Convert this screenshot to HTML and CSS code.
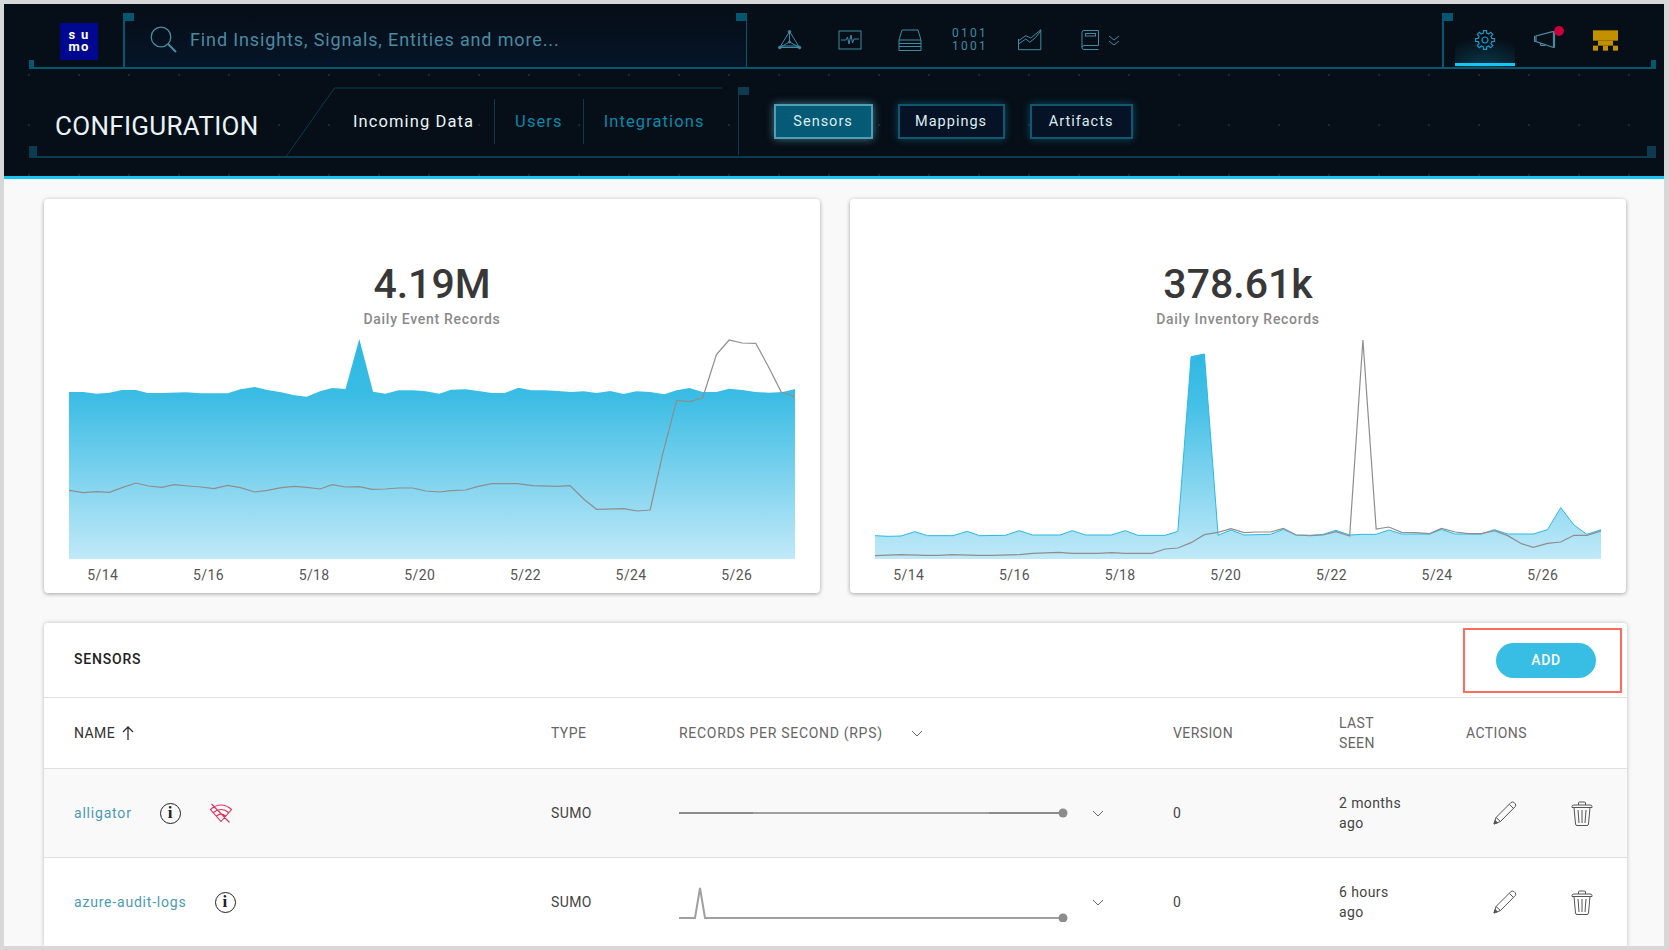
FILE: index.html
```html
<!DOCTYPE html>
<html>
<head>
    <title>Configuration - Sensors</title>
    <link rel="stylesheet" href="styles.css">
</head>
<body>
<div class="window">
    <header class="header">
        <div class="topbar">
            <span class="tick tick-left"></span>
            <span class="tick tick-right"></span>
            <div class="logo">s u<br>mo</div>
            <div class="search">
                <svg class="search-icon" width="27" height="27" viewBox="0 0 27 27"><circle cx="11" cy="11" r="9.8"/><path d="M18 18l8 8" stroke-width="2"/></svg>
                <span class="search-text">Find Insights, Signals, Entities and more...</span>
            </div>
            <nav class="appnav">
                <span class="appnav-item">
                    <svg width="24" height="20" viewBox="0 0 24 20"><path d="M11.5 1.5L1.7 17.5H21.5ZM11.5 1.5V12M1.7 17.5L11.5 12L21.5 17.5M3 16H20"/><circle cx="11.5" cy="1.8" r="1.3"/><circle cx="1.8" cy="17.5" r="1.3"/><circle cx="21.5" cy="17.5" r="1.3"/><circle cx="11.5" cy="12" r="1"/></svg>
                </span>
                <span class="appnav-item">
                    <svg width="24" height="20" viewBox="0 0 24 20"><rect x="1" y="1" width="22" height="18"/><path d="M3 10H8L9.5 7L11 14L13 5L14.5 13L16 9H21"/></svg>
                </span>
                <span class="appnav-item">
                    <svg width="24" height="22" viewBox="0 0 24 22"><path d="M1 11L4 1H20L23 11V21.5H1ZM1 11H23M1 14.5H23M1 17.5H23M20 13V13.1M20 16V16.1M20 19.5V19.6"/></svg>
                </span>
                <span class="appnav-item binary">0101<br>1001</span>
                <span class="appnav-item">
                    <svg width="24" height="22" viewBox="0 0 24 22"><path d="M.5 10V20.7H22.8V.7M.5 11.7L7.8 6.7L12.8 9L17.8 5L22.8.7M.5 15L7.8 10L11.8 13.3L17.8 8.3L22.8 1.7"/></svg>
                </span>
                <span class="appnav-item">
                    <svg width="18" height="20" viewBox="0 0 18 20"><path d="M17.5.5H3Q1 .5 1 2.5V17.5Q1 19.5 3 19.5H17.5M17.5.5V15.5H3Q1 15.5 1 17.5"/><rect x="4.5" y="3.5" width="10" height="2.5"/></svg>
                    <svg class="double-chevron" width="12" height="11" viewBox="0 0 12 11"><path d="M1 1L6 5L11 1M1 6L6 10L11 6"/></svg>
                </span>
            </nav>
            <div class="userbar">
                <span class="userbar-item is-active">
                    <svg width="20" height="20" viewBox="-10 -10 20 20" class="gear"><polygon points="-1.69,6.79 -1.49,9.38 1.49,9.38 1.69,6.79 3.61,6 5.58,7.69 7.69,5.58 6,3.61 6.79,1.69 9.38,1.49 9.38,-1.49 6.79,-1.69 6,-3.61 7.69,-5.58 5.58,-7.69 3.61,-6 1.69,-6.79 1.49,-9.38 -1.49,-9.38 -1.69,-6.79 -3.61,-6 -5.58,-7.69 -7.69,-5.58 -6,-3.61 -6.79,-1.69 -9.38,-1.49 -9.38,1.49 -6.79,1.69 -6,3.61 -7.69,5.58 -5.58,7.69 -3.61,6"/><circle r="3"/></svg>
                </span>
                <span class="userbar-item">
                    <svg class="megaphone" width="22" height="18" viewBox="0 0 22 18"><path d="M20.5 0V16.7M19.5 .3L2 5V10.5L19.5 16.5ZM.5 5V10.5H2M6 12L7 14.5H10.5L11 13.8"/></svg>
                    <span class="badge"></span>
                </span>
                <span class="userbar-item">
                    <svg width="25" height="21" viewBox="0 0 75 61" class="avatar"><rect y="0" width="75" height="31"/><rect x="15" y="31" width="45" height="15"/><rect y="46" width="15" height="15"/><rect x="30" y="46" width="15" height="15"/><rect x="60" y="46" width="15" height="15"/></svg>
                </span>
            </div>
        </div>
        <div class="subbar">
            <div class="subbar-inner">
                <span class="tick-low tick-low-left"></span>
                <span class="tick-low tick-low-right"></span>
                <svg class="slant" width="440" height="70" viewBox="0 0 440 70"><path d="M.5 69L48.5 1H436"/></svg>
                <h1 class="page-title">CONFIGURATION</h1>
                <div class="tabs">
                    <a class="tab is-active">Incoming Data</a>
                    <a class="tab">Users</a>
                    <a class="tab">Integrations</a>
                </div>
                <div class="subtabs">
                    <a class="subtab subtab-sensors is-active">Sensors</a>
                    <a class="subtab subtab-mappings">Mappings</a>
                    <a class="subtab subtab-artifacts">Artifacts</a>
                </div>
            </div>
        </div>
    </header>

    <main>
        <div class="cards">
            <section class="card">
                <div class="stat">4.19M</div>
                <div class="stat-label">Daily Event Records</div>
                <svg class="chart" width="726" height="220" viewBox="76 447 1423 660" preserveAspectRatio="none">
                    <defs>
                        <linearGradient id="fill1" x1="0" y1="0" x2="0" y2="1">
                            <stop offset="0" stop-color="#2db8e3"/><stop offset=".25" stop-color="#3abce4"/><stop offset="1" stop-color="#c0e9f8"/>
                        </linearGradient>
                    </defs>
                    <path fill="url(#fill1)" d="M76 606L104 606L130 611L155 608L180 600L207 600L230 609L258 609L305 607L335 610L387 610L412 598L440 591L465 600L492 607L518 616L542 620L568 604L592 594L618 597L645 447L672 605L696 611L722 601L750 601L775 604L802 611L825 599L853 598L878 603L905 609L930 609L957 593L982 601L1008 601L1033 603L1060 606L1085 604L1110 609L1137 603L1163 612L1188 604L1215 606L1243 613L1267 601L1292 594L1318 606L1345 606L1370 596L1395 600L1422 606L1448 608L1475 606L1499 597V1107H76Z"/>
                    <polyline class="line-grey" points="76,901 104,908 130,905 155,907 180,893 207,879 232,888 258,892 282,884 310,888 335,891 360,896 387,886 412,893 440,906 465,901 492,893 518,889 542,892 568,897 592,884 618,891 645,890 670,898 696,897 722,894 750,894 775,903 802,906 825,902 853,900 878,889 905,881 955,881 985,887 1033,889 1058,887 1087,930 1110,958 1163,956 1190,963 1215,960 1240,790 1267,631 1292,635 1318,624 1345,494 1370,450 1395,459 1422,460 1448,533 1472,606 1499,621"/>
                </svg>
                <div class="axis"><span>5/14</span><span>5/16</span><span>5/18</span><span>5/20</span><span>5/22</span><span>5/24</span><span>5/26</span></div>
            </section>
            <section class="card">
                <div class="stat">378.61k</div>
                <div class="stat-label">Daily Inventory Records</div>
                <svg class="chart" width="726" height="220" viewBox="69 447 1424 660" preserveAspectRatio="none">
                    <defs>
                        <linearGradient id="fill2" x1="0" y1="0" x2="0" y2="1">
                            <stop offset="0" stop-color="#2db8e3"/><stop offset=".25" stop-color="#46c0e6"/><stop offset="1" stop-color="#c0e9f8"/>
                        </linearGradient>
                    </defs>
                    <path fill="url(#fill2)" d="M69 1037L95 1039L120 1038L147 1025L172 1037L222 1037L250 1024L274 1037L325 1036L352 1022L378 1035L432 1035L456 1022L482 1035L533 1035L560 1022L585 1036L638 1036L663 1024L689 500L715 492L742 1036L767 1020L793 1035L845 1033L870 1018L895 1035L922 1036L948 1033L973 1021L1000 1035L1025 1033L1052 1033L1077 1020L1102 1032L1157 1032L1180 1018L1207 1032L1258 1032L1284 1019L1310 1032L1360 1032L1388 1019L1414 953L1440 1005L1465 1033L1493 1019V1107H69Z"/>
                    <polyline class="line-blue" points="69,1037 95,1039 120,1038 147,1025 172,1037 222,1037 250,1024 274,1037 325,1036 352,1022 378,1035 432,1035 456,1022 482,1035 533,1035 560,1022 585,1036 638,1036 663,1024 689,500 715,492 742,1036 767,1020 793,1035 845,1033 870,1018 895,1035 922,1036 948,1033 973,1021 1000,1035 1025,1033 1052,1033 1077,1020 1102,1032 1157,1032 1180,1018 1207,1032 1258,1032 1284,1019 1310,1032 1360,1032 1388,1019 1414,953 1440,1005 1465,1033 1493,1019"/>
                    <polyline class="line-grey" points="69,1097 120,1094 170,1096 195,1096 220,1094 270,1096 300,1096 352,1094 378,1090 430,1087 456,1090 507,1090 533,1088 560,1090 612,1090 638,1077 663,1074 689,1058 715,1034 742,1027 767,1016 793,1028 818,1026 845,1026 870,1015 895,1035 922,1037 948,1035 973,1025 1000,1038 1026,450 1052,1017 1077,1011 1102,1027 1130,1028 1157,1031 1180,1015 1207,1026 1233,1031 1258,1031 1284,1022 1310,1037 1337,1061 1360,1072 1388,1060 1414,1056 1440,1036 1465,1036 1493,1023"/>
                </svg>
                <div class="axis"><span>5/14</span><span>5/16</span><span>5/18</span><span>5/20</span><span>5/22</span><span>5/24</span><span>5/26</span></div>
            </section>
        </div>

        <section class="sensors">
            <div class="sensors-head">
                <h2>SENSORS</h2>
                <button class="add-btn">ADD</button>
                <span class="highlight"></span>
            </div>
            <div class="row row-head">
                <div class="cell-name is-sorted">NAME
                    <svg class="sort-arrow" width="12" height="14" viewBox="0 0 12 14"><path d="M6 14V1M1 6L6 1L11 6"/></svg>
                </div>
                <div>TYPE</div>
                <div class="cell-rps-head">RECORDS PER SECOND (RPS)
                    <svg class="chevron" width="12" height="7" viewBox="0 0 12 7"><path d="M1 1L6 6L11 1"/></svg>
                </div>
                <div>VERSION</div>
                <div class="last-seen">LAST<br>SEEN</div>
                <div>ACTIONS</div>
            </div>
            <div class="row row-alt">
                <div class="cell-name">
                    <a class="sensor-link">alligator</a>
                    <span class="info">i</span>
                    <svg class="wifi-off" width="24" height="20" viewBox="0 0 24 20"><path d="M1.5 6.5C8 .5 16 .5 22.5 6.5L12 18.5ZM4.5 9.5C9 5.5 15 5.5 19.5 9.5M7.5 13C10.5 10.5 13.5 10.5 16.5 13M2.5 1L20.5 19.5"/></svg>
                </div>
                <div>SUMO</div>
                <div class="cell-rps">
                    <svg class="spark" width="390" height="40" viewBox="0 0 390 40"><path d="M0 20H384"/><path class="spark-dark" d="M0 20H74M310 20H384"/><circle cx="384" cy="20" r="4.5"/></svg>
                    <svg class="chevron" width="12" height="7" viewBox="0 0 12 7"><path d="M1 1L6 6L11 1"/></svg>
                </div>
                <div>0</div>
                <div class="last-seen">2 months<br>ago</div>
                <div class="actions">
                    <svg width="24" height="24" viewBox="0 0 24 24"><path d="M1 23L3 16.5L18 1.5Q19.5 .5 21 1.5L22.3 2.8Q23.3 4.2 22.3 5.5L7.5 20.5ZM3 16.5L7.5 20.5M16.5 3.5L20.3 7.3"/><path class="tip" d="M1 23L2 19.5L4.5 21.8Z"/></svg>
                    <svg width="22" height="25" viewBox="0 0 22 25"><path d="M1 5.5Q1 4 3 4H19Q21 4 21 5.5V6.5H1ZM7.5 4V2Q7.5 1 8.5 1H13.5Q14.5 1 14.5 2V4M3 6.5L4.5 23Q4.7 24.5 6 24.5H16Q17.3 24.5 17.5 23L19 6.5M7 9L8 22M11 9V22M15 9L14 22"/></svg>
                </div>
            </div>
            <div class="row">
                <div class="cell-name">
                    <a class="sensor-link">azure-audit-logs</a>
                    <span class="info">i</span>
                </div>
                <div>SUMO</div>
                <div class="cell-rps">
                    <svg class="spark" width="390" height="40" viewBox="0 0 390 40"><path d="M0 36H16L21 6L26 36H384"/><circle cx="384" cy="36" r="4.5"/></svg>
                    <svg class="chevron" width="12" height="7" viewBox="0 0 12 7"><path d="M1 1L6 6L11 1"/></svg>
                </div>
                <div>0</div>
                <div class="last-seen">6 hours<br>ago</div>
                <div class="actions">
                    <svg width="24" height="24" viewBox="0 0 24 24"><path d="M1 23L3 16.5L18 1.5Q19.5 .5 21 1.5L22.3 2.8Q23.3 4.2 22.3 5.5L7.5 20.5ZM3 16.5L7.5 20.5M16.5 3.5L20.3 7.3"/><path class="tip" d="M1 23L2 19.5L4.5 21.8Z"/></svg>
                    <svg width="22" height="25" viewBox="0 0 22 25"><path d="M1 5.5Q1 4 3 4H19Q21 4 21 5.5V6.5H1ZM7.5 4V2Q7.5 1 8.5 1H13.5Q14.5 1 14.5 2V4M3 6.5L4.5 23Q4.7 24.5 6 24.5H16Q17.3 24.5 17.5 23L19 6.5M7 9L8 22M11 9V22M15 9L14 22"/></svg>
                </div>
            </div>
        </section>
    </main>
</div>
</body>
</html>
```
FILE: styles.css
```css
html, body { margin: 0; height: 100%; overflow: hidden; }
body { background: #d8d8d8; font-family: Roboto, "Liberation Sans", sans-serif; font-size: 14px; color: #444; }
h1, h2 { margin: 0; font-weight: 400; }
svg { display: block; fill: none; }

.window { margin: 4px 5px 4px 4px; height: 942px; overflow: hidden; background: #f9f9f9; }

/* header */
.header { height: 175px; box-sizing: border-box; border-bottom: 3px solid #17c5f2; background: #060e17; }
.topbar {
    position: relative;
    display: flex;
    align-items: flex-end;
    height: 65px;
    box-sizing: border-box;
    margin: 0 8px 0 25px;
    border-bottom: 2px solid #05576f;
}
.tick { position: absolute; bottom: -1px; width: 5px; height: 8px; background: #05576f; }
.tick-left { left: 0; }
.tick-right { right: 0; }
.logo {
    align-self: flex-start;
    width: 38px;
    height: 37px;
    margin: 19px 25px 0 31px;
    padding-top: 6px;
    box-sizing: border-box;
    background: #00088f;
    color: #fff;
    font-weight: 700;
    font-size: 13px;
    line-height: 12px;
    letter-spacing: 1.2px;
    text-align: center;
}
.search {
    position: relative;
    display: flex;
    align-items: center;
    gap: 13px;
    width: 624px;
    height: 54px;
    box-sizing: border-box;
    padding: 0 0 2px 25px;
    border-left: 2px solid #05576f;
    border-right: 1px solid #05576f;
    background: linear-gradient(#060e18, #051528);
}
.search::before, .search::after, .userbar::before {
    content: "";
    position: absolute;
    top: 0;
    width: 11px;
    height: 8px;
    background: #05576f;
}
.search::before { left: -2px; }
.search::after { right: -1px; }
.search-icon { stroke: #4a8ba0; stroke-width: 1.3; }
.search-text { color: #4a8ba0; font-size: 18px; letter-spacing: .87px; }

.appnav { display: flex; height: 54px; margin-left: 13px; }
.appnav-item {
    display: flex;
    align-items: center;
    justify-content: center;
    width: 60px;
    color: #3f8ba3;
}
.appnav-item svg { stroke: #3f8ba3; stroke-width: 1; }
.appnav-item circle { fill: #3f8ba3; }
.double-chevron { margin: 0 -21px 0 9px; }
.binary { display: block; text-align: center; font-size: 12px; line-height: 13px; letter-spacing: 2.2px; padding-top: 14px; box-sizing: border-box; }

.userbar {
    position: relative;
    display: flex;
    height: 54px;
    box-sizing: border-box;
    margin-left: auto;
    width: 214px;
    padding-left: 11px;
    border-left: 2px solid #05576f;
}
.userbar::before { left: -2px; }
.userbar-item { position: relative; display: flex; align-items: center; justify-content: center; width: 60px; }
.userbar-item.is-active { background: radial-gradient(ellipse 50px 30px at 50% 100%, #0a3a4c, transparent); }
.userbar-item.is-active::after {
    content: "";
    position: absolute;
    left: 0;
    right: 0;
    bottom: 1px;
    height: 3px;
    background: #17c5f2;
}
.gear { stroke: #1a9bc8; stroke-width: 1.2; }
.megaphone { stroke: #4a8ba0; stroke-width: 1.2; }
.badge {
    position: absolute;
    top: 13px;
    left: 39px;
    width: 10px;
    height: 10px;
    border-radius: 50%;
    background: #c8003c;
}
.avatar { fill: #c39000; margin-left: 1px; }

.subbar {
    height: 107px;
    background-image: radial-gradient(circle, #1a2630 1px, transparent 1.5px);
    background-size: 50px 50px;
    background-position: 0 -19px;
}
.subbar-inner {
    position: relative;
    display: flex;
    align-items: center;
    height: 89px;
    box-sizing: border-box;
    margin: 0 8px 0 25px;
    padding-top: 18px;
    border-bottom: 2px solid #0d3a4e;
}
.tick-low { position: absolute; bottom: -2px; height: 12px; background: #0d3a4e; }
.tick-low-left { left: 0; width: 8px; }
.tick-low-right { right: 0; width: 9px; }
.slant { position: absolute; left: 257px; top: 18px; stroke: #0d3a4e; stroke-width: 1; }
.page-title {
    width: 298px;
    margin: 8px 0 0 26px;
    color: #e8f4f8;
    font-size: 26px;
    letter-spacing: .3px;
}
.tabs { display: flex; height: 45px; }
.tab {
    display: flex;
    align-items: center;
    padding: 0 20px;
    border-left: 1px solid #0d3a4e;
    color: #0a88a8;
    font-size: 16.5px;
    letter-spacing: 1.1px;
}
.tab:first-child { padding-left: 0; border-left: 0; }
.tab.is-active { color: #e8f4f8; }
.subtabs { position: relative; display: flex; gap: 25px; margin-left: 49px; }
.subtabs::before {
    content: "";
    position: absolute;
    left: -36px;
    top: -17px;
    bottom: -16px;
    width: 1px;
    background: #0d3a4e;
}
.subtabs::after {
    content: "";
    position: absolute;
    left: -36px;
    top: -17px;
    width: 11px;
    height: 8px;
    background: #0d3a4e;
}
.subtab {
    display: flex;
    align-items: center;
    justify-content: center;
    height: 35px;
    box-sizing: border-box;
    border: 2px solid #0f5870;
    background: #061226;
    box-shadow: 0 0 8px rgba(23, 160, 200, .4);
    color: #dcecf2;
    font-size: 14.5px;
    letter-spacing: 1px;
}
.subtab-sensors { width: 99px; }
.subtab-mappings { width: 107px; }
.subtab-artifacts { width: 103px; }
.subtab.is-active { border-color: #4e9fb5; background: #055a75; box-shadow: 0 0 8px rgba(120, 210, 235, .55); }

/* stat cards */
.cards {
    display: grid;
    grid-template-columns: 776px 776px;
    gap: 30px;
    padding: 20px 0 0 40px;
}
.card {
    height: 394px;
    box-sizing: border-box;
    padding: 63px 25px 0;
    border-radius: 4px;
    background: #fff;
    box-shadow: 0 1px 4px rgba(0, 0, 0, .35);
    text-align: center;
}
.stat { color: #383838; font-size: 41px; font-weight: 500; line-height: 44px; }
.stat-label { margin-top: 4px; color: #8a8a8a; font-size: 14px; font-weight: 500; line-height: 18px; letter-spacing: .7px; }
.chart { margin-top: 11px; }
.line-blue { fill: none; stroke: #2db8e3; stroke-width: 1; vector-effect: non-scaling-stroke; }
.line-grey { fill: none; stroke: #8e8e8e; stroke-width: 1.2; vector-effect: non-scaling-stroke; }
.axis {
    display: grid;
    grid-template-columns: repeat(7, 105.67px);
    margin-left: -19px;
    height: 32px;
    line-height: 32px;
    color: #555;
    font-size: 14px;
    letter-spacing: .4px;
}

/* sensors table */
.sensors {
    margin: 30px 37px 0 40px;
    border-radius: 4px 4px 0 0;
    background: #fff;
    box-shadow: 0 0 4px rgba(0, 0, 0, .25);
}
.sensors-head {
    position: relative;
    display: flex;
    align-items: center;
    justify-content: space-between;
    height: 75px;
    box-sizing: border-box;
    padding: 0 31px 0 30px;
    border-bottom: 1px solid #e0e0e0;
}
.sensors-head h2 { margin-top: -3px; color: #222; font-size: 14px; font-weight: 500; letter-spacing: .8px; }
.add-btn {
    width: 100px;
    height: 35px;
    border: 0;
    border-radius: 18px;
    background: #38bde5;
    color: #fff;
    font-family: inherit;
    font-size: 14px;
    font-weight: 500;
    letter-spacing: .6px;
}
.highlight {
    position: absolute;
    left: 1419px;
    top: 5px;
    width: 159px;
    height: 65px;
    box-sizing: border-box;
    border: 2px solid #ff6b5f;
}
.row {
    display: grid;
    grid-template-columns: 477px 128px 494px 166px 127px 160px;
    align-items: center;
    height: 89px;
    box-sizing: border-box;
    padding-left: 30px;
    border-bottom: 1px solid #e0e0e0;
    letter-spacing: .4px;
}
.row-head { height: 71px; color: #666; }
.row-alt { background: #f9f9f9; }
.cell-name { display: flex; align-items: center; }
.is-sorted { color: #333; }
.sort-arrow { margin-left: 7px; stroke: #333; stroke-width: 1.3; }
.cell-rps-head { display: flex; align-items: center; gap: 28px; letter-spacing: .7px; }
.chevron { stroke: #666; stroke-width: 1; }
.cell-rps { display: flex; align-items: center; gap: 23px; }
.spark { stroke: #a0a0a0; stroke-width: 2; }
.spark circle { fill: #8c8c8c; stroke: none; }
.spark-dark { stroke: #8c8c8c; }
.last-seen { line-height: 20px; }
.sensor-link { color: #4b9ab5; letter-spacing: .8px; }
.info {
    display: flex;
    align-items: center;
    justify-content: center;
    width: 21px;
    height: 21px;
    box-sizing: border-box;
    margin-left: 28px;
    border: 1.3px solid #222;
    border-radius: 50%;
    color: #222;
    font-family: "Liberation Serif", serif;
    font-size: 17px;
    font-weight: 700;
}
.wifi-off { margin-left: 28px; stroke: #e0305c; stroke-width: 1.1; }
.actions { display: flex; align-items: center; gap: 54px; padding-left: 27px; }
.actions svg { stroke: #555; stroke-width: 1; }
.tip { fill: #555; }
```
